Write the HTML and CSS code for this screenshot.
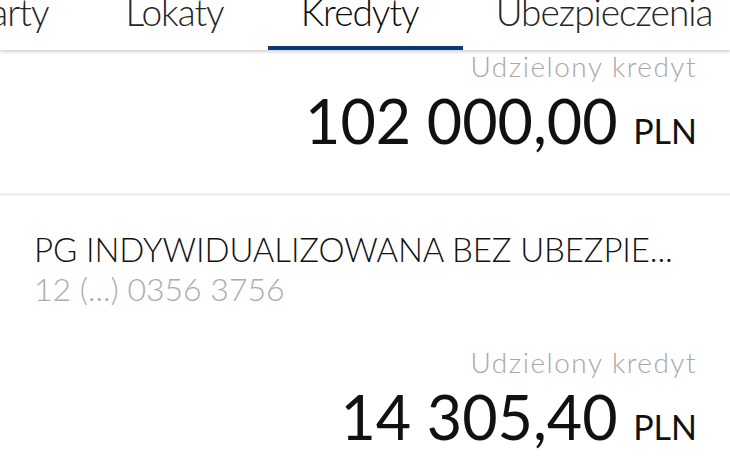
FILE: index.html
```html
<!DOCTYPE html>
<html lang="pl">
<head>
<meta charset="utf-8">
<link rel="stylesheet" href="styles.css">
</head>
<body>
<header class="tabbar">
  <nav class="tabs">
    <div class="tab"><span>Karty</span></div>
    <div class="tab"><span>Lokaty</span></div>
    <div class="tab active"><span>Kredyty</span></div>
    <div class="tab"><span>Ubezpieczenia</span></div>
  </nav>
</header>
<main class="list">
  <section class="loan loan-partial">
    <div class="amounts">
      <div class="label">Udzielony kredyt</div>
      <div class="amount">102 000,00 <span class="cur">PLN</span></div>
    </div>
  </section>
  <section class="loan">
    <div class="title">PG INDYWIDUALIZOWANA BEZ UBEZPIE...</div>
    <div class="account">12 (...) 0356 3756</div>
    <div class="amounts amounts-gap">
      <div class="label">Udzielony kredyt</div>
      <div class="amount">14 305,40 <span class="cur">PLN</span></div>
    </div>
  </section>
</main>
</body>
</html>
```
FILE: styles.css
```css
html, body {
  margin: 0;
  padding: 0;
  background: #ffffff;
  font-family: Lato, "Liberation Sans", sans-serif;
  font-weight: 300;
  color: #111111;
  overflow: hidden;
}

.tabbar {
  position: relative;
  z-index: 2;
  height: 50px;
  background: #ffffff;
  box-shadow: 0 2px 3px rgba(0, 0, 0, 0.18);
  overflow: hidden;
}

.tabs {
  display: flex;
  margin-left: -65px;
  white-space: nowrap;
}

.tab {
  box-sizing: border-box;
  height: 50px;
  padding: 0 44px 0 33px;
  font-size: 37px;
  line-height: 37px;
  letter-spacing: -1px;
  color: #262626;
  border-bottom: 4px solid transparent;
}

.tab span {
  display: block;
  margin-top: -7px;
}

.tab.active {
  color: #0d0d0d;
  border-bottom-color: #0b3a74;
}

.loan {
  padding: 0 33px 41px 34px;
}

.loan-partial {
  border-bottom: 3px solid #f0f0f0;
}

.loan + .loan {
  padding-top: 33px;
}

.amounts {
  text-align: right;
}

.amounts-gap {
  margin-top: 38px;
}

.label {
  font-size: 28px;
  line-height: 32px;
  letter-spacing: 1.5px;
  color: #a8a8a8;
}

.amount {
  margin-top: 8px;
  font-size: 61px;
  line-height: 62px;
  font-weight: 400;
  color: #111111;
}

.cur {
  font-size: 34px;
  line-height: 1;
}

.title {
  font-size: 33px;
  line-height: 40px;
  letter-spacing: -0.12px;
  color: #111111;
  white-space: nowrap;
}

.account {
  margin-top: 1px;
  font-size: 32px;
  line-height: 38px;
  color: #ababab;
}
```
